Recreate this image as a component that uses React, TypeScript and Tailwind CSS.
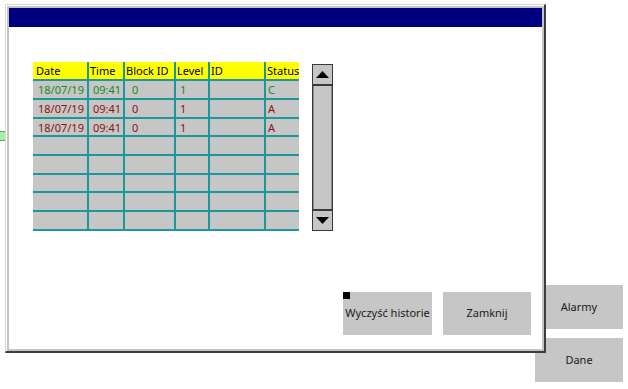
import React from 'react';

type Row = { date: string; time: string; block: string; level: string; id: string; status: string; tone: 'ok' | 'alarm' };

const rows: Row[] = [
  { date: '18/07/19', time: '09:41', block: '0', level: '1', id: '', status: 'C', tone: 'ok' },
  { date: '18/07/19', time: '09:41', block: '0', level: '1', id: '', status: 'A', tone: 'alarm' },
  { date: '18/07/19', time: '09:41', block: '0', level: '1', id: '', status: 'A', tone: 'alarm' },
];

const EMPTY_ROWS = 5;
const font = { fontFamily: '"Noto Sans", "DejaVu Sans", sans-serif' };

const Triangle: React.FC<{ down?: boolean }> = ({ down }) => (
  <svg width="13" height="7" viewBox="0 0 13 7">
    {down ? <polygon points="0,0 13,0 6.5,7" fill="#000" /> : <polygon points="0,7 13,7 6.5,0" fill="#000" />}
  </svg>
);

const HistoryTable: React.FC = () => {
  const all = [...rows, ...Array.from({ length: EMPTY_ROWS }, () => null)];
  return (
    <div className="w-[266px] text-[11px] leading-none" style={font}>
      <div className="flex h-[19px] bg-[#ffff00] text-black border-b-2 border-[#1c9898]">
        <div className="w-[56px] pl-[3px] flex items-center border-r-2 border-[#1c9898]">Date</div>
        <div className="w-[36px] pl-[1px] flex items-center border-r-2 border-[#1c9898]">Time</div>
        <div className="w-[51px] pl-[1px] flex items-center border-r-2 border-[#1c9898]">Block ID</div>
        <div className="w-[34px] pl-[1px] flex items-center border-r-2 border-[#1c9898]">Level</div>
        <div className="w-[56px] pl-[1px] flex items-center border-r-2 border-[#1c9898]">ID</div>
        <div className="w-[33px] pl-[1px] flex items-center">Status</div>
      </div>
      {all.map((r, i) => (
        <div
          key={i}
          className={`flex bg-[#c6c6c6] border-b-2 border-[#1c9898] ${i % 3 === 2 ? 'h-[18px]' : 'h-[19px]'} ${
            r?.tone === 'ok' ? 'text-[#178a17]' : 'text-[#8c1010]'
          }`}
        >
          <div className="w-[56px] pl-[5px] flex items-center border-r-2 border-[#1c9898]">{r?.date}</div>
          <div className="w-[36px] pl-[4px] flex items-center border-r-2 border-[#1c9898]">{r?.time}</div>
          <div className="w-[51px] pl-[7px] flex items-center border-r-2 border-[#1c9898]">{r?.block}</div>
          <div className="w-[34px] pl-[4px] flex items-center border-r-2 border-[#1c9898]">{r?.level}</div>
          <div className="w-[56px] pl-[2px] flex items-center border-r-2 border-[#1c9898]">{r?.id}</div>
          <div className="w-[33px] pl-[2px] flex items-center">{r?.status}</div>
        </div>
      ))}
    </div>
  );
};

const ScrollBar: React.FC = () => (
  <div className="w-[21px] h-[167px] mt-[2px] flex flex-col border border-[#3a3a3a] bg-[#c6c6c6]">
    <div className="h-[21px] flex items-center justify-center border-b-2 border-[#3a3a3a]">
      <Triangle />
    </div>
    <div className="flex-1 border-x border-[#8a8a8a]" />
    <div className="h-[21px] flex items-center justify-center border-t-2 border-[#3a3a3a]">
      <Triangle down />
    </div>
  </div>
);

export default function App() {
  return (
    <div className="relative w-[628px] h-[389px] bg-white overflow-hidden" style={font}>
      {/* background screen items, partly hidden by the dialog */}
      <div className="absolute left-0 top-[131px] w-[7px] h-[10px] bg-[#a6f0a6] border-y border-[#4caf4c]" />
      <button className="absolute left-[535px] top-[285px] w-[88px] h-[44px] bg-[#c6c6c6] text-[11px] text-[#1a1a1a]">
        Alarmy
      </button>
      <button className="absolute left-[535px] top-[338px] w-[88px] h-[44px] bg-[#c6c6c6] text-[11px] text-[#1a1a1a]">
        Dane
      </button>

      {/* history dialog */}
      <div className="absolute left-[5px] top-[4px] w-[541px] h-[349px] flex bg-[#c4c4c4] border-t border-l border-[#d6d6d6] border-r-2 border-b-2 border-r-[#3c3c3c] border-b-[#3c3c3c]">
        <div className="flex-1 flex flex-col border-t border-l border-white p-[2px]">
          <div className="h-[19px] bg-[#000080]" />
          <div className="flex-1 flex flex-col bg-white">
            <div className="flex pt-[35px] pl-[24px] gap-[13px]">
              <HistoryTable />
              <ScrollBar />
            </div>
            <div className="mt-auto flex justify-end gap-[11px] pr-[11px] pb-[14px]">
              <button className="relative w-[89px] h-[43px] bg-[#c6c6c6] text-[11px] text-[#1a1a1a] flex items-center justify-center">
                <span className="absolute left-0 top-0 w-[7px] h-[7px] bg-black" />
                Wyczyść historie
              </button>
              <button className="w-[88px] h-[43px] bg-[#c6c6c6] text-[11px] text-[#1a1a1a] flex items-center justify-center">
                Zamknij
              </button>
            </div>
          </div>
        </div>
      </div>
    </div>
  );
}
